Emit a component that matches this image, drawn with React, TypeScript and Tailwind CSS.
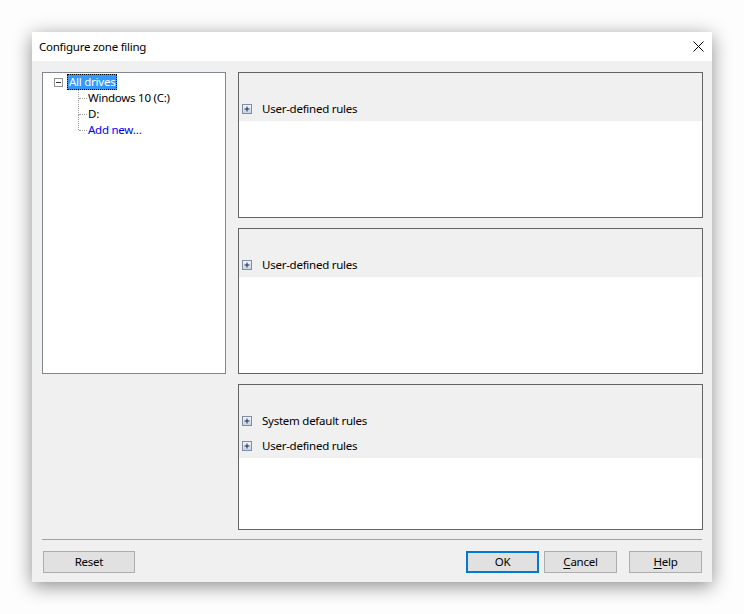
import React from "react";

const font = "font-['Segoe_UI','Noto_Sans',sans-serif]";
const txt = "text-[11.5px] tracking-[-0.25px]";

function PlusBox() {
	return (
		<svg width="10" height="10" viewBox="0 0 10 10" className="shrink-0">
			<defs>
				<linearGradient id="pg" x1="0" y1="0" x2="0" y2="1">
					<stop offset="0" stopColor="#f4f7fb" />
					<stop offset="1" stopColor="#c3d1e4" />
				</linearGradient>
			</defs>
			<rect x="0.5" y="0.5" width="9" height="9" fill="url(#pg)" stroke="#7d8ea6" />
			<path d="M2.5 5h5M5 2.5v5" stroke="#1e2a3c" strokeWidth="1" />
		</svg>
	);
}

function RulePanel({ rows }: { rows: string[] }) {
	return (
		<div className="flex flex-col h-[146px] border border-[#646464] bg-white">
			<div className="flex flex-col pt-[23px] bg-[#f0f0f0]">
				{rows.map((r) => (
					<div key={r} className="flex items-center h-[25px] pl-[3px] gap-[10px]">
						<PlusBox />
						<span className={`${txt} text-black`}>{r}</span>
					</div>
				))}
			</div>
		</div>
	);
}

function Btn({ children, primary, w }: { children: React.ReactNode; primary?: boolean; w: string }) {
	return (
		<button
			type="button"
			className={`${w} h-[22px] flex items-center justify-center ${txt} text-black bg-[#e1e1e1] ${
				primary ? "border-2 border-[#0078d7]" : "border border-[#adadad]"
			}`}
		>
			{children}
		</button>
	);
}

export default function App() {
	return (
		<div className={`w-[744px] h-[614px] bg-[#fdfdfd] pt-[32px] pl-[32px] ${font}`}>
			<div className="w-[680px] h-[550px] flex flex-col bg-[#f0f0f0] shadow-[0_4px_18px_rgba(0,0,0,0.45)]">
				<div className="h-[29px] bg-white flex items-center justify-between pl-[7px] pr-[8px]">
					<span className={`${txt} text-black`}>Configure zone filing</span>
					<svg width="11" height="11" viewBox="0 0 11 11">
						<path d="M0.5 0.5l10 10M10.5 0.5l-10 10" stroke="#000" strokeWidth="1" />
					</svg>
				</div>
				<div className="flex pt-[11px] pl-[10px] pr-[9px] gap-[12px]">
					<div className={`w-[184px] h-[302px] border border-[#828790] bg-white pt-[1px] pl-[11px] ${txt}`}>
						<div className="flex items-center h-[16px]">
							<svg width="9" height="9" viewBox="0 0 9 9" className="shrink-0">
								<rect x="0.5" y="0.5" width="8" height="8" fill="#fff" stroke="#919191" />
								<path d="M2 4.5h5" stroke="#333" />
							</svg>
							<span className="ml-[4px] px-[2px] h-[16px] leading-[15px] bg-[#3399ff] text-white outline-1 outline-dotted outline-[#000] -outline-offset-1">
								All drives
							</span>
						</div>
						<div className="relative pl-[23px]">
							<div className="absolute left-[24px] top-0 h-[25px] w-0 border-l border-dotted border-[#a0a0a0]" />
							<div className="absolute left-[24px] top-[24px] h-[16px] w-0 border-l border-dotted border-[#a0a0a0]" />
							{["Windows 10 (C:)", "D:", "Add new…"].map((t, i) => (
								<div key={t} className="relative flex items-center h-[16px]">
									<div className="absolute left-[2px] top-[8px] w-[8px] border-t border-dotted border-[#a0a0a0]" />
									<span className={`ml-[11px] ${i === 2 ? "text-[#0000ff]" : "text-black"}`}>{t}</span>
								</div>
							))}
						</div>
					</div>
					<div className="flex flex-col w-[465px] gap-[10px]">
						<RulePanel rows={["User-defined rules"]} />
						<RulePanel rows={["User-defined rules"]} />
						<RulePanel rows={["System default rules", "User-defined rules"]} />
					</div>
				</div>
				<div className="mx-[10px] mt-[9px] h-0 border-t border-[#a0a0a0]" />
				<div className="flex items-center justify-between pl-[11px] pr-[10px] mt-[11px]">
					<Btn w="w-[92px]">Reset</Btn>
					<div className="flex">
						<Btn w="w-[73px]" primary>
							OK
						</Btn>
						<div className="w-[5px]" />
						<Btn w="w-[73px]">
							<span className="underline underline-offset-2">C</span>ancel
						</Btn>
						<div className="w-[12px]" />
						<Btn w="w-[73px]">
							<span className="underline underline-offset-2">H</span>elp
						</Btn>
					</div>
				</div>
			</div>
		</div>
	);
}
